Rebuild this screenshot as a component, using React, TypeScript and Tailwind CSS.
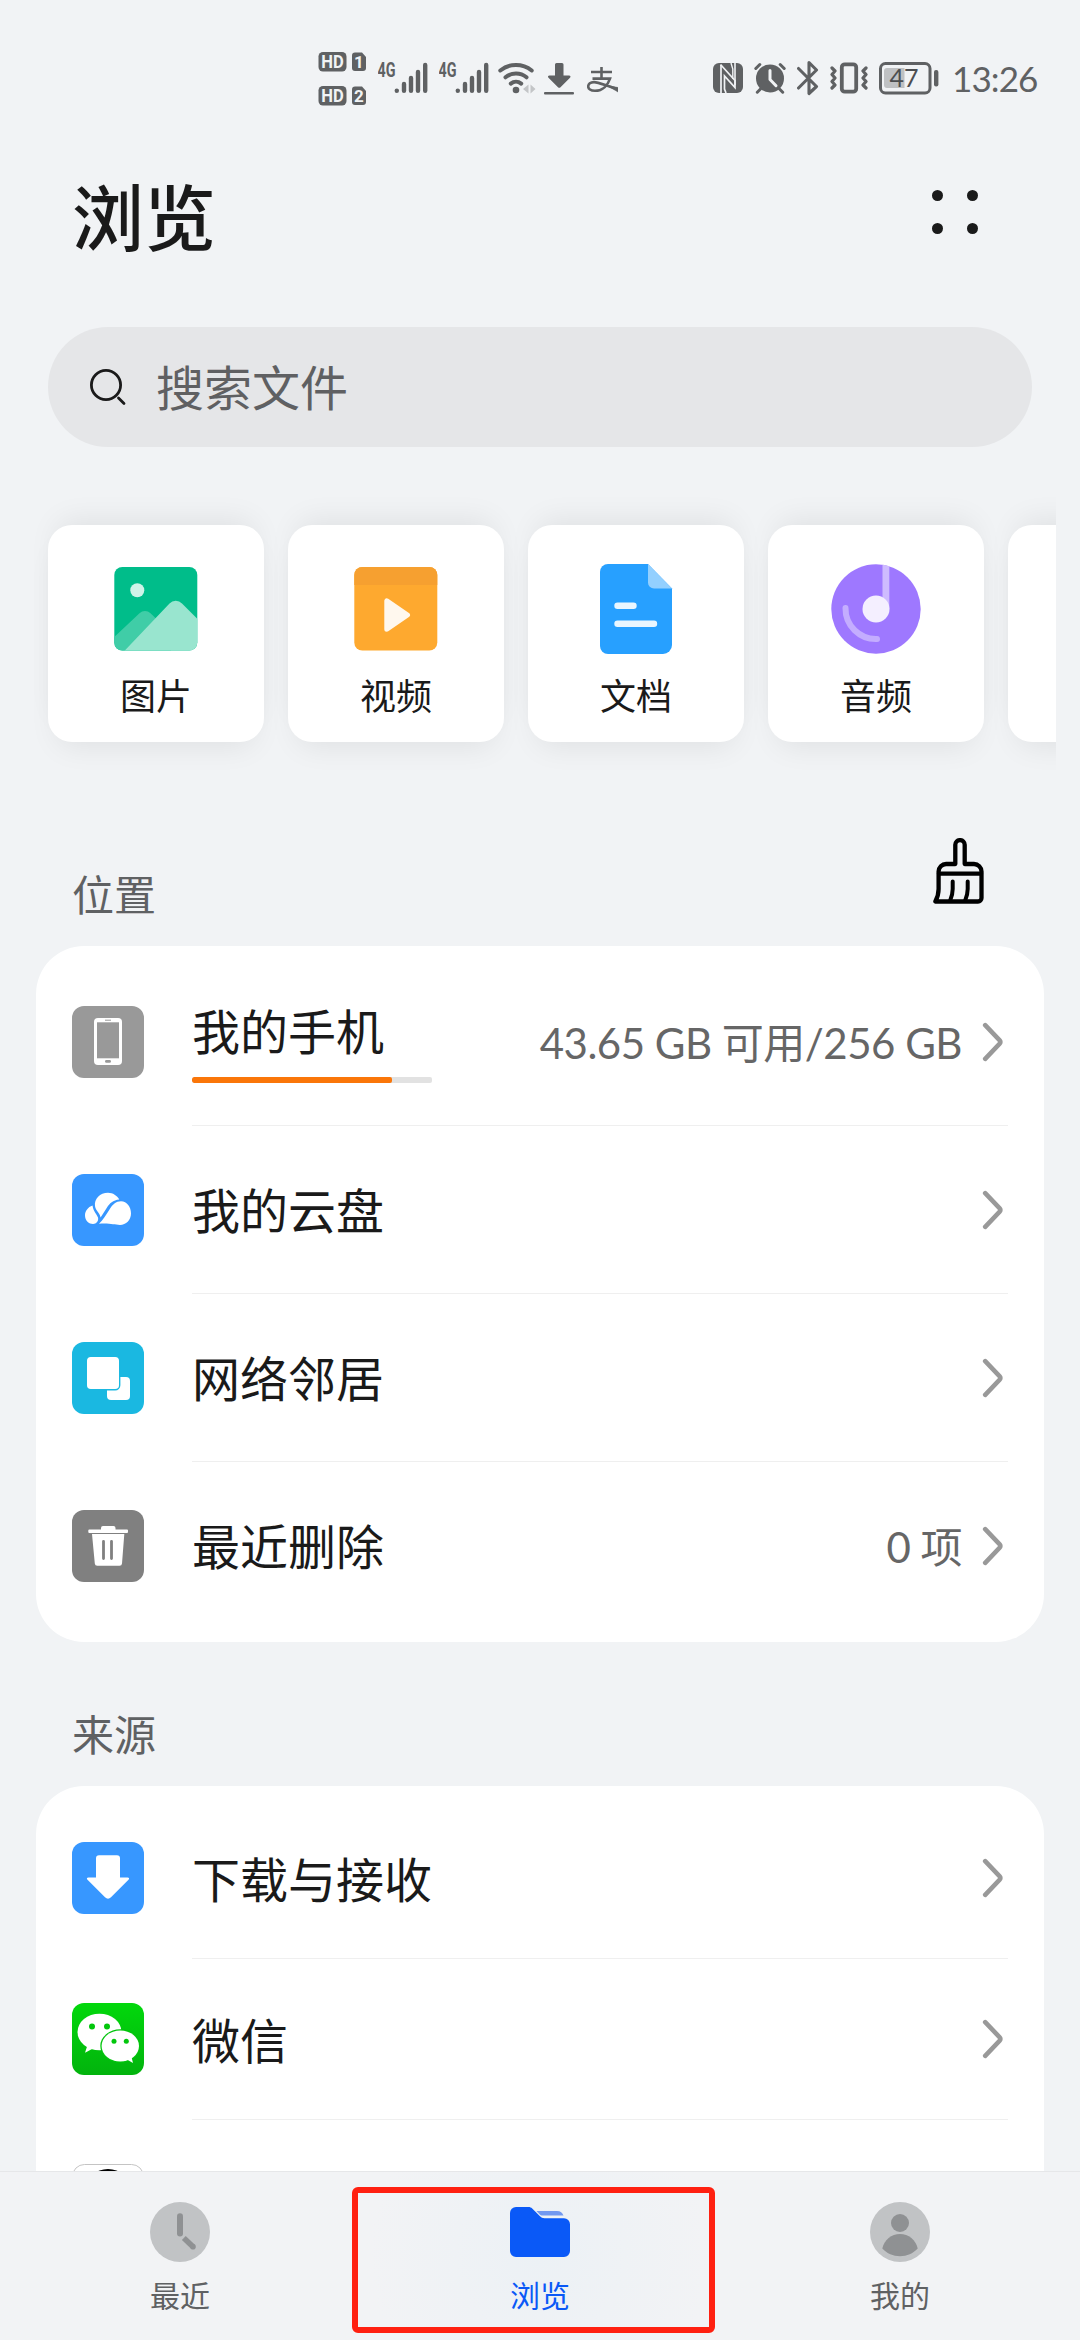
/**
 * File manager — "Browse" tab.
 * Category shortcuts on top, then storage locations and file sources.
 */
import React from "react";

const FONT = "font-[Lato,'Noto_Sans_CJK_SC',sans-serif]";

interface Category {
  label: string;
  icon: React.ReactNode;
}

interface Entry {
  id: string;
  label?: string;
  icon: React.ReactNode;
  value?: string;
  used?: number;
}

/* ---------- Status bar ---------- */

function HdIcon() {
  return (
    <svg width="49" height="56" viewBox="0 0 49 56" fill="#5f6163">
      {[0, 34].map((y, i) => (
        <g key={y} transform={`translate(0 ${y})`}>
          <rect x="0.5" y="2" width="28" height="19.5" rx="4.5" />
          <text x="14.5" y="18" textAnchor="middle" textLength="22.5" lengthAdjust="spacingAndGlyphs" fontSize="18" fontWeight="700" fill="#f1f3f5" fontFamily="Roboto, sans-serif">HD</text>
          <path d="M37 2.500 h7 l4 4.500 v11 a3 3 0 0 1 -3 3 h-8 a3 3 0 0 1 -3 -3 v-12.500 a3 3 0 0 1 3 -3z" />
          <text x="41" y="18" textAnchor="middle" fontSize="17" fontWeight="700" fill="#f1f3f5" fontFamily="Roboto, sans-serif">{i + 1}</text>
        </g>
      ))}
    </svg>
  );
}

function SignalIcon() {
  return (
    <svg width="50" height="56" viewBox="0 0 50 56">
      <text x="-0.5" y="27" textLength="18" lengthAdjust="spacingAndGlyphs" fontSize="20" fontWeight="700" fill="#5f6163" fontFamily="Roboto, sans-serif">4G</text>
      <g stroke="#5f6163" strokeWidth="4.400" strokeLinecap="round">
        <path d="M18.800 40.600v0.200M26 34v6.800M33 28v12.800M40 22v18.800M47.200 15v25.800" />
      </g>
    </svg>
  );
}

function WifiIcon() {
  return (
    <svg width="38" height="56" viewBox="0 0 38 56">
      <g fill="none" stroke="#5f6163" strokeWidth="4" strokeLinecap="round">
        <path d="M2.300 20.500a25 25 0 0 1 31.400 0" />
        <path d="M7.500 27.300a16.500 16.500 0 0 1 21 0" />
        <path d="M12.800 33.600a8.400 8.400 0 0 1 10.400 0" />
      </g>
      <circle cx="18" cy="40" r="3.300" fill="#5f6163" />
      <path d="M30.500 34.500v9l-5.500-4.500zM32.500 34.500v9l5-4.500z" fill="#c3c5c7" />
    </svg>
  );
}

function DownloadIcon() {
  return (
    <svg width="30" height="56" viewBox="0 0 30 56" fill="#5f6163">
      <path d="M12.500 13h5.500a1.500 1.500 0 0 1 1.500 1.500v11h5.500c1.500 0 2 1.200 1 2.200l-9.500 9.500a1.800 1.800 0 0 1-2.500 0l-9.500-9.500c-1-1-.5-2.200 1-2.200h5.500v-11a1.500 1.500 0 0 1 1.500-1.500z" />
      <rect x="0" y="42" width="30" height="2.400" rx="1" />
    </svg>
  );
}

function AlipayIcon() {
  return (
    <svg width="31" height="56" viewBox="0 0 31 56" fill="none" stroke="#5f6163">
      <path d="M4 22h21M14.500 17v11.500" strokeWidth="2.600" />
      <path d="M5.500 28.600h17.500c-2 6-7 12.200-15 12.200c-4.500 0-6.800-2-6.800-4.300c0-2.500 2.300-4.400 5.800-4.400c5 0 12 3.800 23.500 7" strokeWidth="2.600" />
      <path d="M20 35.500l11 2v4.500z" fill="#5f6163" strokeWidth="0.500" />
    </svg>
  );
}

function NfcIcon() {
  return (
    <svg width="30" height="56" viewBox="0 0 30 56">
      <rect x="0" y="13" width="30" height="30" rx="6" fill="#5f6163" />
      <path d="M7.500 14.500L22 30.500V37.500L11.500 26V39L13 43" fill="none" stroke="#f1f3f5" strokeWidth="1.700" />
      <path d="M8 15V43" stroke="#f1f3f5" strokeWidth="1.700" />
      <path d="M18 13L19.800 19V29" fill="none" stroke="#f1f3f5" strokeWidth="1.400" />
      <path d="M22 13V35" stroke="#f1f3f5" strokeWidth="1.600" />
    </svg>
  );
}

function AlarmIcon() {
  return (
    <svg width="32" height="56" viewBox="0 0 32 56">
      <circle cx="16" cy="28.500" r="14" fill="#5f6163" />
      <g stroke="#5f6163" strokeWidth="3" strokeLinecap="round">
        <path d="M1.800 18.500l4-4M30.200 18.500l-4-4M6.500 39l-3.200 3.200M25.500 39l3.200 3.200" />
      </g>
      <path d="M16 20.500v9l6 6.200" fill="none" stroke="#f1f3f5" strokeWidth="3" strokeLinecap="round" strokeLinejoin="round" />
    </svg>
  );
}

function BluetoothIcon() {
  return (
    <svg width="22" height="56" viewBox="0 0 22 56">
      <path d="M1.500 18.500L19.500 36.500L12 43.500V12.500L19.500 20L1.500 38" fill="none" stroke="#5f6163" strokeWidth="3.100" strokeLinecap="round" strokeLinejoin="round" />
    </svg>
  );
}

function VibrateIcon() {
  return (
    <svg width="38" height="56" viewBox="0 0 38 56" fill="none" stroke="#5f6163">
      <rect x="11.800" y="14.300" width="14.400" height="27.400" rx="3" strokeWidth="3.800" />
      <path d="M2 18l3 3l-3 3.500l3 3.500l-3 3.500l3 3.500l-3 3M36 18l-3 3l3 3.500l-3 3.500l3 3.500l-3 3.500l3 3" strokeWidth="3.200" strokeLinejoin="round" strokeLinecap="round" />
    </svg>
  );
}

function BatteryIcon() {
  return (
    <svg width="60" height="56" viewBox="0 0 60 56">
      <rect x="1.500" y="13.500" width="49.500" height="29.400" rx="5" fill="none" stroke="#5f6163" strokeWidth="3" />
      <path d="M8 18h17.500v20h-17.500a3 3 0 0 1 -3 -3v-14a3 3 0 0 1 3 -3z" fill="#bfc1c3" />
      <text x="25" y="37" textAnchor="middle" fontSize="25" fill="#4c4e50" fontFamily="Lato, sans-serif">47</text>
      <rect x="55" y="20" width="4.400" height="16.500" rx="2" fill="#5f6163" />
    </svg>
  );
}

function StatusBar() {
  return (
    <div className="flex h-[156px] shrink-0 items-center pl-[318px] pr-[44px]">
      <HdIcon />
      <div className="ml-[11px] flex gap-[11px]">
        <SignalIcon />
        <SignalIcon />
      </div>
      <div className="ml-[9px] flex gap-2">
        <WifiIcon />
        <DownloadIcon />
      </div>
      <div className="ml-[13px]">
        <AlipayIcon />
      </div>
      <div className="ml-auto flex items-center gap-[11px]">
        <NfcIcon />
        <AlarmIcon />
        <BluetoothIcon />
        <VibrateIcon />
        <BatteryIcon />
        <span className="ml-[2px] w-[84px] whitespace-nowrap text-[35px] leading-[44px] tracking-[-0.9px] text-[#5f6163]">13:26</span>
      </div>
    </div>
  );
}

/* ---------- Category cards ---------- */

const categories: Category[] = [
  {
    label: "图片",
    icon: (
      <svg width="90" height="90" viewBox="0 0 90 90">
        <clipPath id="photo">
          <rect x="3.300" y="3" width="83" height="83.500" rx="8" />
        </clipPath>
        <g clipPath="url(#photo)">
          <rect width="90" height="90" fill="#00bd8a" />
          <path d="M0 76L28.500 49.200a8 8 0 0 1 11 0L60 69V90H0z" fill="#40cda7" />
          <path d="M10.500 90L58.500 39.500a8.500 8.500 0 0 1 12.500 0L90 58.500V90z" fill="#99e5cf" />
        </g>
        <circle cx="26.300" cy="26.300" r="7" fill="#cff3e8" />
      </svg>
    ),
  },
  {
    label: "视频",
    icon: (
      <svg width="90" height="90" viewBox="0 0 90 90">
        <clipPath id="video">
          <rect x="3.300" y="3" width="83" height="83.500" rx="8" />
        </clipPath>
        <g clipPath="url(#video)">
          <rect width="90" height="90" fill="#fea92f" />
          <rect width="90" height="21" fill="#f6a030" />
        </g>
        <path d="M35.800 36.800V65.200L56.500 51z" fill="#fff8ee" stroke="#fff8ee" strokeWidth="5" strokeLinejoin="round" />
      </svg>
    ),
  },
  {
    label: "文档",
    icon: (
      <svg width="90" height="90" viewBox="0 0 90 90">
        <path d="M17 0H57L81 24.500V81a9 9 0 0 1-9 9H17a8 8 0 0 1-8-8V8a8 8 0 0 1 8-8z" fill="#27a0ff" />
        <path d="M57 0L81 24.500H63a6 6 0 0 1-6-6z" fill="#93d0ff" />
        <path d="M26.500 41.800H42.500M26.500 59.800H63" stroke="#e9f6ff" strokeWidth="6.400" strokeLinecap="round" />
      </svg>
    ),
  },
  {
    label: "音频",
    icon: (
      <svg width="90" height="90" viewBox="0 0 90 90">
        <circle cx="45" cy="45" r="44.700" fill="#9e78ff" />
        <path d="M51.500 0.800Q55 1.200 58.300 2.200V45H51.500z" fill="#cebbff" />
        <path d="M14.500 44a30.500 30.500 0 0 0 31.500 31" fill="none" stroke="#c4adff" strokeWidth="6" strokeLinecap="round" />
        <circle cx="45" cy="45" r="13.500" fill="#f4efff" />
      </svg>
    ),
  },
];

function CategoryCard({ label, icon }: Category) {
  return (
    <div className="flex h-[217px] w-[216px] shrink-0 flex-col items-center rounded-3xl bg-white pt-[39px] shadow-[0_14px_30px_-10px_rgba(0,0,0,0.08),0_-14px_30px_-10px_rgba(0,0,0,0.08)]">
      <div className="h-[90px]">{icon}</div>
      <span className="mt-[22px] text-[36px] leading-[40px] text-[#1a1a1a]">{label}</span>
    </div>
  );
}

/* ---------- List sections ---------- */

const locations: Entry[] = [
  {
    id: "phone",
    label: "我的手机",
    value: "43.65 GB 可用/256 GB",
    used: 83.3,
    icon: (
      <svg width="72" height="72" viewBox="0 0 72 72">
        <rect width="72" height="72" rx="12" fill="#999" />
        <rect x="22" y="12" width="28" height="47" rx="4" fill="#fff" />
        <rect x="25" y="16.300" width="22" height="36" fill="#999" />
        <rect x="33" y="13.700" width="6" height="1" fill="#999" />
        <rect x="33" y="54" width="6" height="2.800" rx="1.400" fill="#999" />
      </svg>
    ),
  },
  {
    id: "cloud",
    label: "我的云盘",
    icon: (
      <svg width="72" height="72" viewBox="0 0 72 72">
        <rect width="72" height="72" rx="12" fill="#3797ff" />
        <g fill="#fff">
          <path d="M20.500 31.500C16 33 13 37 13 41.500C13 46.500 17 50 21 50C24.500 50 26.800 47 26 43.500C25 40.500 21.500 38 20.500 31.500z" />
          <path d="M23 32C22 25 28 18.700 36 18.700C41 18.700 45 21.500 47.300 25.500C41 26 37.500 29.500 35 33.500L28.600 43.500C27.500 38 23.500 36.500 23 32z" />
          <path d="M27 49.800C31 46 34 41 37.500 35.500C40.500 30.500 44 27.300 49 27.300C55 27.300 59 33 59 39.500C59 46 54 50.900 48 50.900C42 50.900 38 49 27 49.800z" />
        </g>
      </svg>
    ),
  },
  {
    id: "network",
    label: "网络邻居",
    icon: (
      <svg width="72" height="72" viewBox="0 0 72 72">
        <rect width="72" height="72" rx="12" fill="#1ab8e1" />
        <rect x="35" y="35" width="23" height="23" rx="4" fill="#fff" />
        <rect x="14.300" y="14.300" width="33.400" height="33.400" rx="4.500" fill="#fff" stroke="#1ab8e1" strokeWidth="1.400" />
      </svg>
    ),
  },
  {
    id: "trash",
    label: "最近删除",
    value: "0 项",
    icon: (
      <svg width="72" height="72" viewBox="0 0 72 72">
        <rect width="72" height="72" rx="12" fill="#808080" />
        <g fill="#fff">
          <path d="M29 19.500V18a2 2 0 0 1 2-2H41.500a2 2 0 0 1 2 2V19.500H55a1 1 0 0 1 1 1V22a1 1 0 0 1-1 1H17.300a1 1 0 0 1-1-1V20.500a1 1 0 0 1 1-1z" />
          <path d="M20 24H52.300L50 53.500a2.500 2.500 0 0 1-2.500 2.300H25.300a2.500 2.500 0 0 1-2.500-2.300z" />
        </g>
        <path d="M31.500 31.300V48.500M39.500 31.300V48.500" stroke="#808080" strokeWidth="2.800" strokeLinecap="round" />
      </svg>
    ),
  },
];

const sources: Entry[] = [
  {
    id: "download",
    label: "下载与接收",
    icon: (
      <svg width="72" height="72" viewBox="0 0 72 72">
        <rect width="72" height="72" rx="12" fill="#3797ff" />
        <path d="M27 13.300H45a3 3 0 0 1 3 3V35.500H55.500c1.800 0 2 1.300 1 2.300L39 55.300a4.300 4.300 0 0 1-6 0L15.500 37.800c-1-1-.8-2.300 1-2.300H24V16.300a3 3 0 0 1 3-3z" fill="#fff" />
      </svg>
    ),
  },
  {
    id: "wechat",
    label: "微信",
    icon: (
      <svg width="72" height="72" viewBox="0 0 72 72">
        <linearGradient id="wechat-bg" x1="0" y1="0" x2="0" y2="1">
          <stop offset="0" stopColor="#02d80c" />
          <stop offset="1" stopColor="#02b30d" />
        </linearGradient>
        <rect width="72" height="72" rx="12" fill="url(#wechat-bg)" />
        <ellipse cx="27.500" cy="29" rx="22" ry="18.300" fill="#fff" />
        <path d="M15.500 42L13 49.700L21 45.500z" fill="#fff" />
        <ellipse cx="48.300" cy="43" rx="20" ry="16.700" fill="#02c40c" />
        <ellipse cx="48.300" cy="43" rx="18.700" ry="15.500" fill="#fff" />
        <path d="M54 56L61 60L59 52z" fill="#fff" />
        <g fill="#02c70c">
          <circle cx="20" cy="23.500" r="3" />
          <circle cx="35" cy="23.500" r="3" />
          <circle cx="42" cy="38.300" r="2.500" />
          <circle cx="54.300" cy="38.300" r="2.500" />
        </g>
      </svg>
    ),
  },
  {
    id: "qq",
    icon: (
      <svg width="72" height="72" viewBox="0 0 72 72">
        <rect x="0.500" y="0.500" width="71" height="71" rx="12" fill="#fff" stroke="#c4c4c4" />
        <ellipse cx="36" cy="25" rx="22" ry="20" fill="#000" />
      </svg>
    ),
  },
];

function Chevron() {
  return (
    <svg width="22" height="40" viewBox="0 0 22 40" fill="none">
      <path d="M3.200 3.200L17.700 18.300a2.400 2.400 0 0 1 0 3.400L3.200 36.800" stroke="#999" strokeWidth="4.600" strokeLinecap="round" />
    </svg>
  );
}

function EntryRow({ entry, divider, compact }: { entry: Entry; divider: boolean; compact?: boolean }) {
  return (
    <div className="flex flex-1 items-center pl-9">
      <div className={compact ? "mb-px" : ""}>{entry.icon}</div>
      <div className={`ml-12 mr-9 flex h-full flex-1 items-center border-b pr-1 ${divider ? "border-[#efefef]" : "border-transparent"}`}>
        <div className="flex flex-col">
          <span className={`whitespace-nowrap text-[48px] leading-[56px] text-[#1a1a1a] ${entry.used ? "mt-1" : "mt-[3px]"}`}>{entry.label}</span>
          {entry.used && (
            <div className="mt-[17px] h-1.5 w-60 overflow-hidden rounded-xs bg-[#e2e2e2]">
              <div className="h-full rounded-xs bg-[#fa7609]" style={{ width: `${entry.used}%` }} />
            </div>
          )}
        </div>
        <span className="ml-auto mr-5 mt-[3px] whitespace-nowrap text-[42px] leading-[48px] tracking-[-0.5px] text-[#666]">{entry.value}</span>
        <Chevron />
      </div>
    </div>
  );
}

function EntryList({ entries, compact }: { entries: Entry[]; compact?: boolean }) {
  return (
    <div className={`mx-9 flex shrink-0 flex-col rounded-[48px] bg-white py-3 ${compact ? "h-[507px]" : "h-[696px]"}`}>
      {entries.map((e, i) => <EntryRow key={e.id} entry={e} divider={i < entries.length - 1} compact={compact} />)}
    </div>
  );
}

function BroomIcon() {
  return (
    <svg width="52" height="66" viewBox="0 0 52 66" fill="none" stroke="#000" strokeWidth="4.300" strokeLinecap="round" strokeLinejoin="round">
      <path d="M22.300 26V6.800a4.700 4.700 0 0 1 9.400 0V26H41a7.500 7.500 0 0 1 7.500 7.500V60a3.500 3.500 0 0 1-3.500 3.500H2.300C4.500 59.500 5.600 56 5.600 51V33.500a7.500 7.500 0 0 1 7.500-7.500z" />
      <path d="M6 35.700H48" />
      <path d="M19.700 43.500V51C19.700 56 18.500 59.500 17 63M34.700 43.500V51C34.700 56 33.500 59.500 32 63" strokeWidth="4" />
    </svg>
  );
}

/* ---------- Bottom navigation ---------- */

function NavItem({ label, active, children }: { label: string; active?: boolean; children: React.ReactNode }) {
  return (
    <div className={`relative flex flex-1 flex-col items-center pt-[30px] ${active ? "bg-[radial-gradient(circle_at_center,#ecf1f5,#f2f3f5_170px)]" : ""}`}>
      <div className="flex h-[60px] items-center">{children}</div>
      <span className={`mt-[15px] text-[30px] leading-[36px] ${active ? "text-[#0a59f7]" : "text-[#5f6163]"}`}>{label}</span>
      {active && <div className="absolute left-[-8px] top-[15px] h-[146px] w-[363px] rounded-md border-6 border-[#ff2010]" />}
    </div>
  );
}

function BottomNav() {
  return (
    <div className="flex h-[169px] shrink-0 border-t border-[#e6e7e9] bg-[#f2f3f5]">
      <NavItem label="最近">
        <svg width="60" height="60" viewBox="0 0 60 60">
          <circle cx="30" cy="30" r="30" fill="#c1c3c5" />
          <path d="M30 14.300V31.500" stroke="#8f9193" strokeWidth="6" strokeLinecap="round" />
          <path d="M33.800 36L43.300 45" stroke="#8f9193" strokeWidth="5.600" />
          <circle cx="43" cy="44.700" r="2.800" fill="#8f9193" />
        </svg>
      </NavItem>
      <NavItem label="浏览" active>
        <svg width="60" height="50" viewBox="0 0 60 50">
          <path d="M26.500 4H47c3.500 0 5.500 1.800 6.500 4.500H32.500c-1.300 0-2.200-.4-3-1.200z" fill="#7299f0" />
          <path d="M6 0H18.500c1.500 0 2.700.5 3.700 1.500L30 9.300c1.200 1.200 2.500 1.900 4.500 1.900H54a6 6 0 0 1 6 6V44a6 6 0 0 1-6 6H6a6 6 0 0 1-6-6V6a6 6 0 0 1 6-6z" fill="#0a59f7" />
        </svg>
      </NavItem>
      <NavItem label="我的">
        <svg width="60" height="60" viewBox="0 0 60 60">
          <circle cx="30" cy="30" r="30" fill="#c1c3c5" />
          <circle cx="30" cy="21" r="9" fill="#8f9193" />
          <path d="M12.300 46.500C14 38 21.500 32 30 32S46 38 47.700 46.500C43 51.500 37 54.200 30 54.200S17 51.500 12.300 46.500z" fill="#8f9193" />
        </svg>
      </NavItem>
    </div>
  );
}

export default function App() {
  return (
    <div lang="zh-CN" className={`flex h-[2340px] w-[1080px] flex-col overflow-hidden bg-[#f1f3f5] ${FONT}`}>
      <StatusBar />

      {/* Title */}
      <div className="flex h-[171px] shrink-0 items-start justify-between pl-[72px] pr-[102px]">
        <h1 className="mt-[19px] text-[72px] font-medium leading-[84px] text-[#1a1a1a]">浏览</h1>
        <div className="mt-[34px] grid grid-cols-2 gap-x-6 gap-y-[22px]">
          {[0, 1, 2, 3].map((i) => <span key={i} className="size-[11px] rounded-full bg-[#1a1a1a]" />)}
        </div>
      </div>

      {/* Search */}
      <div className="mx-12 flex h-[120px] shrink-0 items-center rounded-full bg-[#e5e6e8] pl-[42px]">
        <svg width="36" height="38" viewBox="0 0 36 38" fill="none" stroke="#1a1a1a" strokeWidth="2.800" strokeLinecap="round">
          <circle cx="16" cy="17" r="14.600" />
          <path d="M28.500 30L34 35.500" />
        </svg>
        <span className="ml-[30px] mt-0.5 text-[48px] leading-[56px] text-[#5f6062]">搜索文件</span>
      </div>

      <div className="mr-6 mt-[30px] flex h-[313px] shrink-0 gap-6 overflow-hidden pl-12 pt-12">
        {categories.map((c) => <CategoryCard key={c.label} label={c.label} icon={c.icon} />)}
        <CategoryCard label="" icon={null} />
      </div>

      {/* Files */}
      <div className="flex flex-1 flex-col overflow-hidden">
        <div className="flex h-[156px] shrink-0 items-start justify-between pl-[72px] pr-[95px]">
          <h2 className="mt-[80px] text-[42px] leading-[50px] text-[#5f6163]">位置</h2>
          <div className="mt-12">
            <BroomIcon />
          </div>
        </div>
        <EntryList entries={locations} />

        <div className="h-[144px] shrink-0 pl-[72px]">
          <h2 className="pt-[68px] text-[42px] leading-[50px] text-[#5f6163]">来源</h2>
        </div>
        <EntryList entries={sources} compact />
      </div>

      <BottomNav />
    </div>
  );
}
